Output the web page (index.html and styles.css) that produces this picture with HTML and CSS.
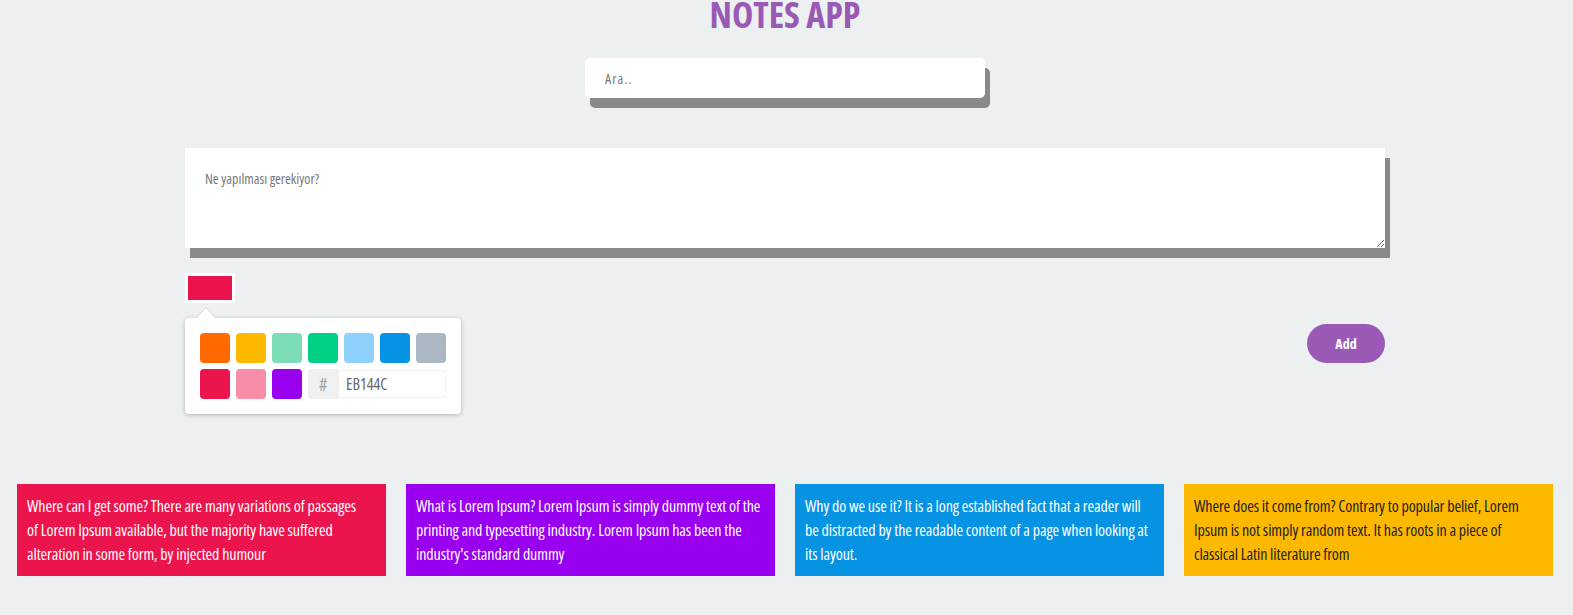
FILE: index.html
```html
<!DOCTYPE html>
<html lang="tr">
<head>
<meta charset="utf-8">
<title>Notes App</title>
<link rel="stylesheet" href="styles.css">
</head>
<body>
<h1 class="title">NOTES APP</h1>
<div class="search-wrap">
  <input class="search" type="text" placeholder="Ara..">
</div>
<div class="composer">
  <textarea class="note-input" placeholder="Ne yapılması gerekiyor?"></textarea>
  <div class="controls">
    <div class="picker-col">
      <div class="swatch-btn"><div class="swatch-color"></div></div>
      <div class="twitter-picker">
        <div class="picker-body">
          <span class="sw sw-orange"></span>
          <span class="sw sw-amber"></span>
          <span class="sw sw-mint"></span>
          <span class="sw sw-green"></span>
          <span class="sw sw-sky"></span>
          <span class="sw sw-blue"></span>
          <span class="sw sw-gray"></span>
          <span class="sw sw-red"></span>
          <span class="sw sw-pink"></span>
          <span class="sw sw-purple"></span>
          <span class="hash">#</span>
          <input class="hex" type="text" value="EB144C">
        </div>
      </div>
    </div>
    <button class="add-btn">Add</button>
  </div>
</div>
<div class="notes">
  <div class="note note-red">Where can I get some? There are many variations of passages<br>of Lorem Ipsum available, but the majority have suffered<br>alteration in some form, by injected humour</div>
  <div class="note note-purple">What is Lorem Ipsum? Lorem Ipsum is simply dummy text of the<br>printing and typesetting industry. Lorem Ipsum has been the<br>industry's standard dummy</div>
  <div class="note note-blue">Why do we use it? It is a long established fact that a reader will<br>be distracted by the readable content of a page when looking at<br>its layout.</div>
  <div class="note note-amber">Where does it come from? Contrary to popular belief, Lorem<br>Ipsum is not simply random text. It has roots in a piece of<br>classical Latin literature from</div>
</div>
</body>
</html>
```
FILE: styles.css
```css
* { box-sizing: border-box; }
html, body { margin: 0; }
body {
  background: #ecf0f1;
  font-family: "Open Sans", "Roboto", sans-serif;
  font-stretch: 75%;
  padding-right: 3px;
  color: #333;
}
input, textarea, button {
  font-family: inherit;
  font-stretch: inherit;
}
.title {
  margin: 0;
  text-align: center;
  font-size: 36px;
  line-height: 30px;
  font-weight: 700;
  color: #9b59b6;
}
.search-wrap {
  display: flex;
  justify-content: center;
  margin-top: 28px;
}
.search {
  width: 400px;
  height: 40px;
  border: 0;
  border-radius: 5px;
  background: #fff;
  box-shadow: 5px 10px 0 #898989;
  padding: 0 20px;
  font-size: 14px;
  letter-spacing: 1px;
  outline: none;
}
.search::placeholder { color: #777; }
.composer {
  width: 1200px;
  margin: 50px auto 0;
}
.note-input {
  display: block;
  width: 1200px;
  height: 100px;
  border: 0;
  background: #fff;
  box-shadow: 5px 10px 0 #898989;
  padding: 19px 20px 20px;
  font-size: 14px;
  line-height: 24px;
  outline: none;
}
.note-input::placeholder { color: #777; }
.controls {
  margin-top: 25px;
  display: flex;
  justify-content: space-between;
  align-items: center;
}
.picker-col {
  display: flex;
  flex-direction: column;
  align-items: flex-start;
}
.swatch-btn {
  padding: 3px;
  background: #fff;
  border-radius: 1px;
}
.swatch-color {
  width: 44px;
  height: 24px;
  background: #eb144c;
}
.twitter-picker {
  position: relative;
  margin-top: 15px;
  width: 276px;
  background: #fff;
  border-radius: 4px;
  box-shadow: rgba(0, 0, 0, 0.25) 0 1px 4px;
}
.twitter-picker::before,
.twitter-picker::after {
  content: "";
  position: absolute;
  left: 12px;
  width: 0;
  height: 0;
  border-style: solid;
  border-width: 0 9px 10px;
}
.twitter-picker::before {
  top: -11px;
  border-color: transparent transparent rgba(0, 0, 0, 0.1);
}
.twitter-picker::after {
  top: -10px;
  border-color: transparent transparent #fff;
}
.picker-body {
  display: flex;
  flex-wrap: wrap;
  padding: 15px 9px 9px 15px;
}
.sw {
  width: 30px;
  height: 30px;
  border-radius: 4px;
  margin: 0 6px 6px 0;
}
.sw-orange { background: #ff6900; }
.sw-amber { background: #fcb900; }
.sw-mint { background: #7bdcb5; }
.sw-green { background: #00d084; }
.sw-sky { background: #8ed1fc; }
.sw-blue { background: #0693e3; }
.sw-gray { background: #abb8c3; }
.sw-red { background: #eb144c; }
.sw-pink { background: #f78da7; }
.sw-purple { background: #9900ef; }
.hash {
  width: 30px;
  height: 30px;
  background: #f0f0f0;
  border-radius: 4px 0 0 4px;
  color: #98a1a4;
  display: flex;
  align-items: center;
  justify-content: center;
  font-size: 18px;
}
.hex {
  width: 108px;
  height: 28px;
  margin: 1px 6px 6px 0;
  border: 0;
  border-radius: 0 4px 4px 0;
  box-shadow: inset 0 0 0 1px #f0f0f0;
  padding: 0 0 0 8px;
  font-size: 16px;
  color: #666;
  outline: none;
  background: #fff;
}
.add-btn {
  width: 78px;
  height: 39px;
  border: 0;
  border-radius: 20px;
  background: #9b59b6;
  color: #fff;
  font-weight: 700;
  font-size: 14px;
}
.notes {
  display: grid;
  grid-template-columns: repeat(4, 1fr);
  gap: 20px;
  padding: 0 17px;
  margin-top: 70px;
}
.note {
  padding: 10px;
  font-size: 16px;
  line-height: 24px;
  color: #fff;
  min-height: 92px;
  white-space: nowrap;
  letter-spacing: -0.1px;
}
.note-red { background: #eb144c; }
.note-purple { background: #9900ef; }
.note-blue { background: #0693e3; }
.note-amber { background: #fcb900; color: #222; }
```
